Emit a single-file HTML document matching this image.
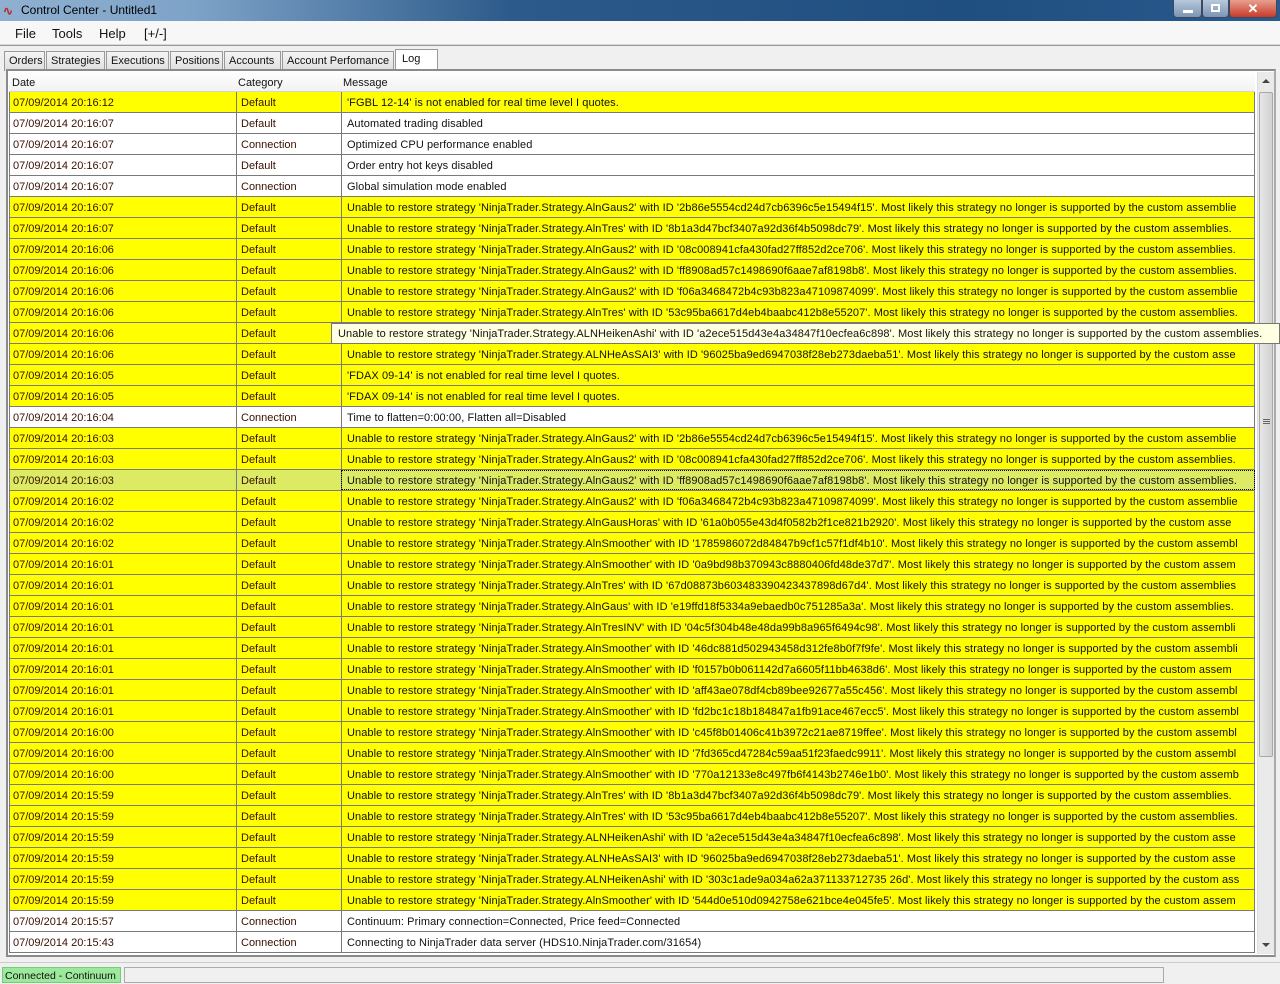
<!DOCTYPE html>
<html><head><meta charset="utf-8"><style>
*{margin:0;padding:0;box-sizing:border-box}
body{width:1280px;height:984px;overflow:hidden;background:#f0f0f0;font-family:"Liberation Sans",sans-serif;font-size:11px;color:#111;position:relative}
#title{position:absolute;left:0;top:0;width:1280px;height:21px;background:linear-gradient(90deg,#8fb0d0 0%,#7ea3c8 15%,#2c5a8a 40%,#1f4e80 75%,#2a5b8e 100%)}
#title .t{position:absolute;left:21px;top:3px;font-size:12px;color:#000}
#title .ic{position:absolute;left:3px;top:4px;color:#c02020;font-size:12px;font-weight:bold}
.wb{position:absolute;top:0;height:18px;border:1px solid #3a4a60;border-top:none;border-radius:0 0 4px 4px}
#menu{position:absolute;left:0;top:21px;width:1280px;height:24px;background:#f7f7f7;border-bottom:1px solid #d8d8d8}
#menu span{position:absolute;top:5px;font-size:13px}
#tabs{position:absolute;left:0;top:45px;width:1280px;height:25px;background:#f0f0f0;border-top:1px solid #999}
.tab{position:absolute;top:5px;height:20px;border:1px solid #999;border-bottom:none;background:linear-gradient(#f4f4f4,#dedede);font-size:11px;padding:3px 0 0 4px;white-space:nowrap;overflow:hidden}
.tab.a{top:3px;height:23px;background:#fff;padding-left:6px}
#frame{position:absolute;left:6px;top:69px;width:1270px;height:888px;border:2px solid #8a8a8a;border-right-color:#aaa;background:#fff}
#grid{position:absolute;left:1px;top:0;width:1246px}
.h{height:21px;background:linear-gradient(#fff,#f2f2f2);border-bottom:1px solid #d5d5d5;position:relative}
.h span{position:absolute;top:6px}
.r{height:21px;position:relative;border-bottom:1px solid #7a7a7a;border-left:1px solid #7a7a7a;background:#ff0;white-space:nowrap;overflow:hidden}
.r.w{background:#fff}
.r.s{background:#dcea64}
.r span{position:absolute;top:5px}
.r .d{left:3px;color:#3a1000}
.r .c{left:226px;border-left:1px solid #7a7a7a;top:0;height:20px;padding:5px 0 0 4px;width:105px;color:#3a1000}
.r .m{left:331px;border-left:1px solid #7a7a7a;top:0;height:20px;padding:5px 0 0 5px;width:914px;overflow:hidden;border-right:1px solid #7a7a7a;letter-spacing:0.08px}
#sb{position:absolute;left:1249px;top:1px;width:17px;height:882px;background:#eaeaea;border-left:1px solid #ddd}
#thumb{position:absolute;left:1px;top:20px;width:14px;height:665px;background:linear-gradient(90deg,#e6e6e6,#d2d2d2);border:1px solid #a8a8a8;border-radius:2px}
#tip{position:absolute;left:331px;top:323px;width:949px;height:21px;background:#ffffe1;border:1px solid #767676;padding:4px 0 0 6px;white-space:nowrap;overflow:hidden;letter-spacing:0.08px}
#status{position:absolute;left:0;top:962px;width:1280px;height:22px;background:#f0f0f0;border-top:1px solid #ccc}
#st1{position:absolute;left:2px;top:4px;width:119px;height:16px;background:#9ce89c;border:1px solid #7c7;padding:2px 0 0 2px;font-size:10.5px;white-space:nowrap;overflow:hidden}
#st2{position:absolute;left:124px;top:4px;width:1040px;height:16px;border:1px solid #aaa;background:#f0f0f0}
</style></head><body>
<div id="title"><span class="ic">∿</span><span class="t">Control Center - Untitled1</span>
<div class="wb" style="left:1173px;width:29px;background:linear-gradient(#b8c8dc,#7c94b4)"><div style="position:absolute;left:9px;top:10px;width:10px;height:3px;background:#fff"></div></div>
<div class="wb" style="left:1202px;width:27px;background:linear-gradient(#b8c8dc,#7c94b4)"><div style="position:absolute;left:8px;top:4px;width:9px;height:8px;border:2px solid #fff"></div></div>
<div class="wb" style="left:1229px;width:48px;background:linear-gradient(#e8a090,#c83a28);color:#fff;font-weight:bold;text-align:center;font-size:13px;line-height:17px">✕</div>
</div>
<div id="menu"><span style="left:15px">File</span><span style="left:52px">Tools</span><span style="left:99px">Help</span><span style="left:144px">[+/-]</span></div>
<div id="tabs">
<div class="tab" style="left:4px;width:41px">Orders</div>
<div class="tab" style="left:46px;width:59px">Strategies</div>
<div class="tab" style="left:106px;width:63px">Executions</div>
<div class="tab" style="left:170px;width:53px">Positions</div>
<div class="tab" style="left:224px;width:57px">Accounts</div>
<div class="tab" style="left:282px;width:112px">Account Perfomance</div>
<div class="tab a" style="left:395px;width:43px">Log</div>
</div>
<div id="frame">
<div id="grid">
<div class="h"><span style="left:3px">Date</span><span style="left:229px">Category</span><span style="left:334px">Message</span></div>
<div class="r"><span class="d">07/09/2014 20:16:12</span><span class="c">Default</span><span class="m">'FGBL 12-14' is not enabled for real time level I quotes.</span></div>
<div class="r w"><span class="d">07/09/2014 20:16:07</span><span class="c">Default</span><span class="m">Automated trading disabled</span></div>
<div class="r w"><span class="d">07/09/2014 20:16:07</span><span class="c">Connection</span><span class="m">Optimized CPU performance enabled</span></div>
<div class="r w"><span class="d">07/09/2014 20:16:07</span><span class="c">Default</span><span class="m">Order entry hot keys disabled</span></div>
<div class="r w"><span class="d">07/09/2014 20:16:07</span><span class="c">Connection</span><span class="m">Global simulation mode enabled</span></div>
<div class="r"><span class="d">07/09/2014 20:16:07</span><span class="c">Default</span><span class="m">Unable to restore strategy 'NinjaTrader.Strategy.AlnGaus2' with ID '2b86e5554cd24d7cb6396c5e15494f15'. Most likely this strategy no longer is supported by the custom assemblie</span></div>
<div class="r"><span class="d">07/09/2014 20:16:07</span><span class="c">Default</span><span class="m">Unable to restore strategy 'NinjaTrader.Strategy.AlnTres' with ID '8b1a3d47bcf3407a92d36f4b5098dc79'. Most likely this strategy no longer is supported by the custom assemblies.</span></div>
<div class="r"><span class="d">07/09/2014 20:16:06</span><span class="c">Default</span><span class="m">Unable to restore strategy 'NinjaTrader.Strategy.AlnGaus2' with ID '08c008941cfa430fad27ff852d2ce706'. Most likely this strategy no longer is supported by the custom assemblies.</span></div>
<div class="r"><span class="d">07/09/2014 20:16:06</span><span class="c">Default</span><span class="m">Unable to restore strategy 'NinjaTrader.Strategy.AlnGaus2' with ID 'ff8908ad57c1498690f6aae7af8198b8'. Most likely this strategy no longer is supported by the custom assemblies.</span></div>
<div class="r"><span class="d">07/09/2014 20:16:06</span><span class="c">Default</span><span class="m">Unable to restore strategy 'NinjaTrader.Strategy.AlnGaus2' with ID 'f06a3468472b4c93b823a47109874099'. Most likely this strategy no longer is supported by the custom assemblie</span></div>
<div class="r"><span class="d">07/09/2014 20:16:06</span><span class="c">Default</span><span class="m">Unable to restore strategy 'NinjaTrader.Strategy.AlnTres' with ID '53c95ba6617d4eb4baabc412b8e55207'. Most likely this strategy no longer is supported by the custom assemblies.</span></div>
<div class="r"><span class="d">07/09/2014 20:16:06</span><span class="c">Default</span><span class="m"></span></div>
<div class="r"><span class="d">07/09/2014 20:16:06</span><span class="c">Default</span><span class="m">Unable to restore strategy 'NinjaTrader.Strategy.ALNHeAsSAI3' with ID '96025ba9ed6947038f28eb273daeba51'. Most likely this strategy no longer is supported by the custom asse</span></div>
<div class="r"><span class="d">07/09/2014 20:16:05</span><span class="c">Default</span><span class="m">'FDAX 09-14' is not enabled for real time level I quotes.</span></div>
<div class="r"><span class="d">07/09/2014 20:16:05</span><span class="c">Default</span><span class="m">'FDAX 09-14' is not enabled for real time level I quotes.</span></div>
<div class="r w"><span class="d">07/09/2014 20:16:04</span><span class="c">Connection</span><span class="m">Time to flatten=0:00:00, Flatten all=Disabled</span></div>
<div class="r"><span class="d">07/09/2014 20:16:03</span><span class="c">Default</span><span class="m">Unable to restore strategy 'NinjaTrader.Strategy.AlnGaus2' with ID '2b86e5554cd24d7cb6396c5e15494f15'. Most likely this strategy no longer is supported by the custom assemblie</span></div>
<div class="r"><span class="d">07/09/2014 20:16:03</span><span class="c">Default</span><span class="m">Unable to restore strategy 'NinjaTrader.Strategy.AlnGaus2' with ID '08c008941cfa430fad27ff852d2ce706'. Most likely this strategy no longer is supported by the custom assemblies.</span></div>
<div class="r s"><span class="d">07/09/2014 20:16:03</span><span class="c">Default</span><span class="m" style="outline:1px dotted #000;outline-offset:-1px">Unable to restore strategy 'NinjaTrader.Strategy.AlnGaus2' with ID 'ff8908ad57c1498690f6aae7af8198b8'. Most likely this strategy no longer is supported by the custom assemblies.</span></div>
<div class="r"><span class="d">07/09/2014 20:16:02</span><span class="c">Default</span><span class="m">Unable to restore strategy 'NinjaTrader.Strategy.AlnGaus2' with ID 'f06a3468472b4c93b823a47109874099'. Most likely this strategy no longer is supported by the custom assemblie</span></div>
<div class="r"><span class="d">07/09/2014 20:16:02</span><span class="c">Default</span><span class="m">Unable to restore strategy 'NinjaTrader.Strategy.AlnGausHoras' with ID '61a0b055e43d4f0582b2f1ce821b2920'. Most likely this strategy no longer is supported by the custom asse</span></div>
<div class="r"><span class="d">07/09/2014 20:16:02</span><span class="c">Default</span><span class="m">Unable to restore strategy 'NinjaTrader.Strategy.AlnSmoother' with ID '1785986072d84847b9cf1c57f1df4b10'. Most likely this strategy no longer is supported by the custom assembl</span></div>
<div class="r"><span class="d">07/09/2014 20:16:01</span><span class="c">Default</span><span class="m">Unable to restore strategy 'NinjaTrader.Strategy.AlnSmoother' with ID '0a9bd98b370943c8880406fd48de37d7'. Most likely this strategy no longer is supported by the custom assem</span></div>
<div class="r"><span class="d">07/09/2014 20:16:01</span><span class="c">Default</span><span class="m">Unable to restore strategy 'NinjaTrader.Strategy.AlnTres' with ID '67d08873b603483390423437898d67d4'. Most likely this strategy no longer is supported by the custom assemblies</span></div>
<div class="r"><span class="d">07/09/2014 20:16:01</span><span class="c">Default</span><span class="m">Unable to restore strategy 'NinjaTrader.Strategy.AlnGaus' with ID 'e19ffd18f5334a9ebaedb0c751285a3a'. Most likely this strategy no longer is supported by the custom assemblies.</span></div>
<div class="r"><span class="d">07/09/2014 20:16:01</span><span class="c">Default</span><span class="m">Unable to restore strategy 'NinjaTrader.Strategy.AlnTresINV' with ID '04c5f304b48e48da99b8a965f6494c98'. Most likely this strategy no longer is supported by the custom assembli</span></div>
<div class="r"><span class="d">07/09/2014 20:16:01</span><span class="c">Default</span><span class="m">Unable to restore strategy 'NinjaTrader.Strategy.AlnSmoother' with ID '46dc881d502943458d312fe8b0f7f9fe'. Most likely this strategy no longer is supported by the custom assembli</span></div>
<div class="r"><span class="d">07/09/2014 20:16:01</span><span class="c">Default</span><span class="m">Unable to restore strategy 'NinjaTrader.Strategy.AlnSmoother' with ID 'f0157b0b061142d7a6605f11bb4638d6'. Most likely this strategy no longer is supported by the custom assem</span></div>
<div class="r"><span class="d">07/09/2014 20:16:01</span><span class="c">Default</span><span class="m">Unable to restore strategy 'NinjaTrader.Strategy.AlnSmoother' with ID 'aff43ae078df4cb89bee92677a55c456'. Most likely this strategy no longer is supported by the custom assembl</span></div>
<div class="r"><span class="d">07/09/2014 20:16:01</span><span class="c">Default</span><span class="m">Unable to restore strategy 'NinjaTrader.Strategy.AlnSmoother' with ID 'fd2bc1c18b184847a1fb91ace467ecc5'. Most likely this strategy no longer is supported by the custom assembl</span></div>
<div class="r"><span class="d">07/09/2014 20:16:00</span><span class="c">Default</span><span class="m">Unable to restore strategy 'NinjaTrader.Strategy.AlnSmoother' with ID 'c45f8b01406c41b3972c21ae8719ffee'. Most likely this strategy no longer is supported by the custom assembl</span></div>
<div class="r"><span class="d">07/09/2014 20:16:00</span><span class="c">Default</span><span class="m">Unable to restore strategy 'NinjaTrader.Strategy.AlnSmoother' with ID '7fd365cd47284c59aa51f23faedc9911'. Most likely this strategy no longer is supported by the custom assembl</span></div>
<div class="r"><span class="d">07/09/2014 20:16:00</span><span class="c">Default</span><span class="m">Unable to restore strategy 'NinjaTrader.Strategy.AlnSmoother' with ID '770a12133e8c497fb6f4143b2746e1b0'. Most likely this strategy no longer is supported by the custom assemb</span></div>
<div class="r"><span class="d">07/09/2014 20:15:59</span><span class="c">Default</span><span class="m">Unable to restore strategy 'NinjaTrader.Strategy.AlnTres' with ID '8b1a3d47bcf3407a92d36f4b5098dc79'. Most likely this strategy no longer is supported by the custom assemblies.</span></div>
<div class="r"><span class="d">07/09/2014 20:15:59</span><span class="c">Default</span><span class="m">Unable to restore strategy 'NinjaTrader.Strategy.AlnTres' with ID '53c95ba6617d4eb4baabc412b8e55207'. Most likely this strategy no longer is supported by the custom assemblies.</span></div>
<div class="r"><span class="d">07/09/2014 20:15:59</span><span class="c">Default</span><span class="m">Unable to restore strategy 'NinjaTrader.Strategy.ALNHeikenAshi' with ID 'a2ece515d43e4a34847f10ecfea6c898'. Most likely this strategy no longer is supported by the custom asse</span></div>
<div class="r"><span class="d">07/09/2014 20:15:59</span><span class="c">Default</span><span class="m">Unable to restore strategy 'NinjaTrader.Strategy.ALNHeAsSAI3' with ID '96025ba9ed6947038f28eb273daeba51'. Most likely this strategy no longer is supported by the custom asse</span></div>
<div class="r"><span class="d">07/09/2014 20:15:59</span><span class="c">Default</span><span class="m">Unable to restore strategy 'NinjaTrader.Strategy.ALNHeikenAshi' with ID '303c1ade9a034a62a371133712735 26d'. Most likely this strategy no longer is supported by the custom ass</span></div>
<div class="r"><span class="d">07/09/2014 20:15:59</span><span class="c">Default</span><span class="m">Unable to restore strategy 'NinjaTrader.Strategy.AlnSmoother' with ID '544d0e510d0942758e621bce4e045fe5'. Most likely this strategy no longer is supported by the custom assem</span></div>
<div class="r w"><span class="d">07/09/2014 20:15:57</span><span class="c">Connection</span><span class="m">Continuum: Primary connection=Connected, Price feed=Connected</span></div>
<div class="r w"><span class="d">07/09/2014 20:15:43</span><span class="c">Connection</span><span class="m">Connecting to NinjaTrader data server (HDS10.NinjaTrader.com/31654)</span></div>
</div>
<div id="sb"><div style="position:absolute;left:4px;top:7px;border:4px solid transparent;border-top:none;border-bottom:4px solid #444;width:0"></div>
<div id="thumb"><div style="position:absolute;left:3px;top:326px;width:7px;height:5px;border-top:1px solid #666;border-bottom:1px solid #666"></div><div style="position:absolute;left:3px;top:328px;width:7px;height:1px;background:#666"></div></div>
<div style="position:absolute;left:4px;top:871px;border:4px solid transparent;border-bottom:none;border-top:4px solid #444;width:0"></div></div>
</div>
<div id="tip">Unable to restore strategy 'NinjaTrader.Strategy.ALNHeikenAshi' with ID 'a2ece515d43e4a34847f10ecfea6c898'. Most likely this strategy no longer is supported by the custom assemblies.</div>
<div id="status"><div id="st1">Connected - Continuum</div><div id="st2"></div></div>
</body></html>
